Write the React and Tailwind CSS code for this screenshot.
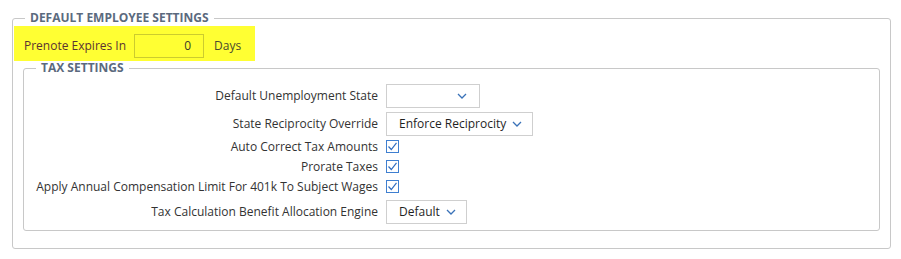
const font = { fontFamily: '"Open Sans", "Noto Sans", sans-serif' };

function Chevron() {
  return (
    <svg width="10" height="6" viewBox="0 0 10 6" className="shrink-0">
      <path d="M1 1l4 4 4-4" fill="none" stroke="#3a72b8" strokeWidth="1.3" />
    </svg>
  );
}

function Select({ value, width = '' }) {
  return (
    <div
      className={`h-6 ${width} flex items-center justify-end gap-[6px] pl-[12px] pr-[10px] border border-[#cfcfcf] bg-white text-[12px] text-[#1f1f1f]`}
    >
      {value && <span className="mr-auto">{value}</span>}
      <Chevron />
    </div>
  );
}

function Checkbox() {
  return (
    <span className="w-[13px] h-[13px] border border-[#3f7fd0] bg-white flex items-center justify-center">
      <svg width="11" height="11" viewBox="0 0 11 11">
        <path d="M1.5 5.5l2.8 3L9.5 1.8" fill="none" stroke="#2f6dc0" strokeWidth="1.2" />
      </svg>
    </span>
  );
}

function Row({ label, children, className = 'h-6' }) {
  return (
    <div className={`flex items-center gap-2 ${className}`}>
      <div className="w-[354px] text-right text-[12px] text-[#333]">{label}</div>
      {children}
    </div>
  );
}

export default function App() {
  return (
    <div className="bg-white w-[901px] h-[259px] pt-[10px] pl-3 pr-[10px]" style={font}>
      <fieldset className="border border-[#c8c8c8] rounded-[3px] pb-[17px] h-[239px]">
        <legend className="ml-3 px-[5px] text-[12px] leading-4 font-bold text-[#5b6a7e]">
          DEFAULT EMPLOYEE SETTINGS
        </legend>

        <div className="ml-px w-[241px] h-[35px] bg-[#ffff33] flex items-center gap-[8px] pl-[10px] pt-[5px]">
          <span className="text-[12px] text-[#5a3232]">Prenote Expires In</span>
          <div className="w-[70px] h-6 border border-[#cccc2e] flex items-center justify-end pr-[12px] text-[12px] text-[#3a3a2a]">
            0
          </div>
          <span className="ml-[2px] text-[12px] text-[#4a4a30]">Days</span>
        </div>

        <fieldset className="ml-[10px] mr-[10px] mt-[-1px] border border-[#c8c8c8] rounded-[3px] pb-[6px]">
          <legend className="ml-3 px-[5px] text-[12px] leading-4 font-bold text-[#5b6a7e]">
            TAX SETTINGS
          </legend>
          <div className="pt-2 flex flex-col">
            <Row label="Default Unemployment State">
              <div className="w-[94px] h-6 flex items-center justify-end pr-[12px] border border-[#cfcfcf] bg-white">
                <Chevron />
              </div>
            </Row>
            <Row label="State Reciprocity Override" className="h-6 mt-1">
              <Select value="Enforce Reciprocity" />
            </Row>
            <Row label="Auto Correct Tax Amounts" className="h-5 pt-px">
              <Checkbox />
            </Row>
            <Row label="Prorate Taxes" className="h-5 pt-px">
              <Checkbox />
            </Row>
            <Row label="Apply Annual Compensation Limit For 401k To Subject Wages" className="h-5 pt-px">
              <Checkbox />
            </Row>
            <Row label="Tax Calculation Benefit Allocation Engine" className="h-6 mt-1">
              <Select value="Default" />
            </Row>
          </div>
        </fieldset>
      </fieldset>
    </div>
  );
}
